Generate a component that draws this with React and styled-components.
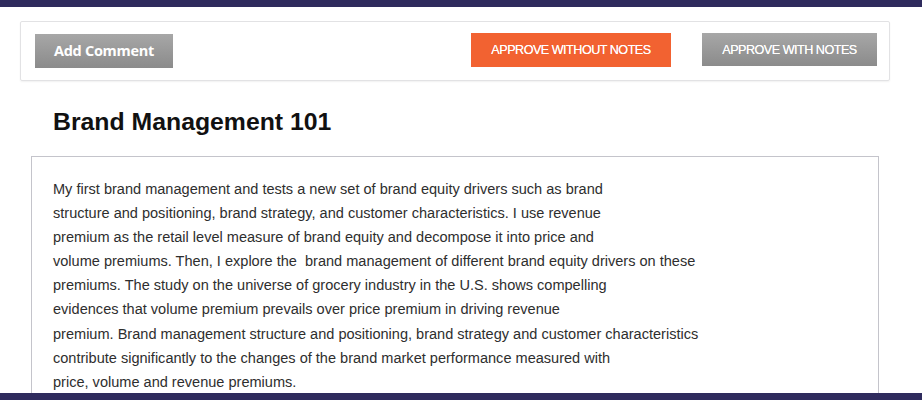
import React from "react";
import styled, { createGlobalStyle } from "styled-components";

const Global = createGlobalStyle`
  html, body { margin: 0; padding: 0; background: #fff; }
  body { font-family: "Liberation Sans", Arial, sans-serif; overflow: hidden; }
`;

const Page = styled.div`
  border-top: 7px solid #2f2b5d;
  padding: 14px 0 0 20px;
  height: 400px;
  box-sizing: border-box;
`;

const BottomBar = styled.div`
  position: fixed;
  left: 0;
  right: 0;
  bottom: 0;
  height: 7px;
  background: #2f2b5d;
`;

const Toolbar = styled.div`
  width: 870px;
  height: 60px;
  box-sizing: border-box;
  border: 1px solid #e2e2e4;
  border-radius: 2px;
  box-shadow: 0 1px 2px rgba(0, 0, 0, 0.06);
  display: flex;
  align-items: flex-start;
  padding: 11px 12px 0 14px;
`;

const Spacer = styled.div`
  flex: 1;
`;

const Button = styled.button`
  border: none;
  border-radius: 0;
  margin: 0;
  padding: 0;
  color: #fff;
  cursor: pointer;
  display: flex;
  align-items: center;
  justify-content: center;
  width: ${(p) => p.$w}px;
  height: ${(p) => p.$h}px;
  margin-top: ${(p) => p.$mt || 0}px;
  margin-left: ${(p) => p.$ml || 0}px;
  background: ${(p) =>
    p.$variant === "orange"
      ? "#f26231"
      : "linear-gradient(#a7a7a7, #8b8b8b)"};
`;

const CommentLabel = styled.span`
  font-family: "Open Sans", "Noto Sans", sans-serif;
  font-weight: 700;
  font-size: 14.5px;
  letter-spacing: -0.3px;
  margin-top: -1px;
`;

const ApproveLabel = styled.span`
  font-family: "Liberation Sans", Arial, sans-serif;
  font-size: 12.6px;
  letter-spacing: -0.5px;
  text-transform: uppercase;
  text-shadow: 0 0 0.4px rgba(255, 255, 255, 0.9);
`;

const Title = styled.h1`
  margin: 29px 0 0 33px;
  font-family: "Liberation Sans", Arial, sans-serif;
  font-size: 24.8px;
  line-height: 24px;
  font-weight: 700;
  color: #111;
`;

const TextBox = styled.div`
  margin: 22px 0 0 11px;
  width: 848px;
  box-sizing: border-box;
  border: 1px solid #c4c4cb;
  padding: 20px 0 0 21px;
  height: 300px;
`;

const Para = styled.p`
  margin: 0;
  font-family: "Liberation Sans", Arial, sans-serif;
  font-size: 14.55px;
  line-height: 24.1px;
  color: #2e2e2e;
  white-space: pre;
`;

const lines = [
  "My first brand management and tests a new set of brand equity drivers such as brand",
  "structure and positioning, brand strategy, and customer characteristics. I use revenue",
  "premium as the retail level measure of brand equity and decompose it into price and",
  "volume premiums. Then, I explore the  brand management of different brand equity drivers on these",
  "premiums. The study on the universe of grocery industry in the U.S. shows compelling",
  "evidences that volume premium prevails over price premium in driving revenue",
  "premium. Brand management structure and positioning, brand strategy and customer characteristics",
  "contribute significantly to the changes of the brand market performance measured with",
  "price, volume and revenue premiums.",
];

export default function App() {
  return (
    <>
      <Global />
      <Page>
        <Toolbar>
          <Button $w={138} $h={34} $mt={1}>
            <CommentLabel>Add Comment</CommentLabel>
          </Button>
          <Spacer />
          <Button $variant="orange" $w={200} $h={34}>
            <ApproveLabel>Approve without notes</ApproveLabel>
          </Button>
          <Button $w={175} $h={33} $ml={31}>
            <ApproveLabel>Approve with notes</ApproveLabel>
          </Button>
        </Toolbar>
        <Title>Brand Management 101</Title>
        <TextBox>
          {lines.map((l, i) => (
            <Para key={i}>{l}</Para>
          ))}
        </TextBox>
      </Page>
      <BottomBar />
    </>
  );
}
